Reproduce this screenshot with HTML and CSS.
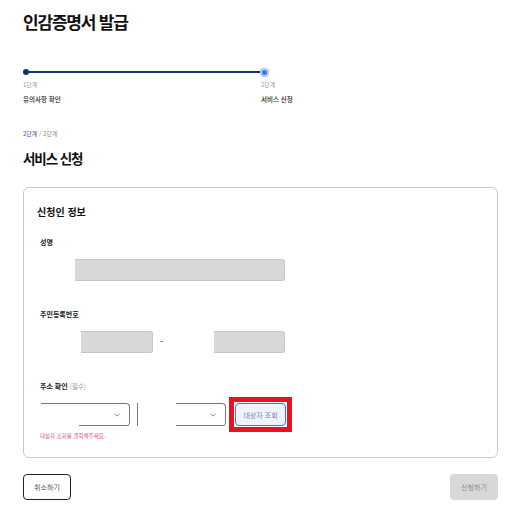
FILE: index.html
```html
<!DOCTYPE html>
<html lang="ko">
<head>
<meta charset="utf-8">
<link rel="stylesheet" href="styles.css">
</head>
<body>
<main class="page">
  <h1 class="title">인감증명서 발급</h1>

  <div class="stepper">
    <div class="track">
      <span class="dot done"></span>
      <span class="bar"></span>
      <span class="dot current"></span>
    </div>
    <div class="step-labels">
      <div class="step">
        <div class="step-no">1단계</div>
        <div class="step-name">유의사항 확인</div>
      </div>
      <div class="step">
        <div class="step-no">2단계</div>
        <div class="step-name">서비스 신청</div>
      </div>
    </div>
  </div>

  <div class="crumb"><span class="crumb-cur">2단계</span> / 2단계</div>
  <h2 class="section-title">서비스 신청</h2>

  <section class="card">
    <h3 class="card-title">신청인 정보</h3>

    <div class="label label-first">성명</div>
    <div class="row row-name">
      <div class="input input-name"></div>
    </div>

    <div class="label">주민등록번호</div>
    <div class="row row-rrn">
      <div class="input input-rrn1"></div>
      <span class="dash">-</span>
      <div class="input input-rrn2"></div>
    </div>

    <div class="label">주소 확인 <span class="opt">(필수)</span></div>
    <div class="row row-addr">
      <div class="select select-1">
        <svg class="chev" width="6" height="4" viewBox="0 0 6 4"><path d="M0.5 0.7 L3 3.2 L5.5 0.7" fill="none" stroke="#777" stroke-width="0.9"/></svg>
      </div>
      <span class="vsep"></span>
      <div class="select select-2">
        <svg class="chev" width="6" height="4" viewBox="0 0 6 4"><path d="M0.5 0.7 L3 3.2 L5.5 0.7" fill="none" stroke="#777" stroke-width="0.9"/></svg>
      </div>
      <span class="highlight">
        <button class="btn-lookup" type="button">대상자 조회</button>
      </span>
    </div>
    <div class="error">대상자 조회를 클릭해주세요.</div>
  </section>

  <div class="actions">
    <button class="btn btn-cancel" type="button">취소하기</button>
    <button class="btn btn-submit" type="button">신청하기</button>
  </div>
</main>
</body>
</html>
```

FILE: styles.css
```css
* { box-sizing: border-box; }
html, body { margin: 0; padding: 0; background: #fff; }
body {
  font-family: "Noto Sans CJK KR", "Noto Sans", sans-serif;
  color: #111;
}
.page {
  width: 475px;
  margin-left: 23px;
  padding-top: 13px;
}
.title {
  margin: 0;
  font-size: 17px;
  line-height: 18px;
  letter-spacing: -1.2px;
  font-weight: 700;
  color: #111;
}

/* stepper */
.stepper { margin-top: 37px; width: 246px; }
.track {
  display: flex;
  align-items: center;
  height: 8px;
}
.dot { display: block; border-radius: 50%; flex: none; }
.dot.done {
  width: 6px; height: 6px;
  background: #0b3573;
}
.dot.current {
  width: 9px; height: 9px;
  background: #3d74e6;
  box-shadow: 0 0 0 2px #bcd0f7 inset;
}
.bar {
  flex: 1;
  height: 2px;
  background: #0b3573;
}
.step-labels {
  display: grid;
  grid-template-columns: 238px auto;
  margin-top: 5px;
}
.step-no {
  font-size: 6px;
  line-height: 8px;
  color: #9a9a9a;
}
.step-name {
  margin-top: 6px;
  font-size: 6.5px;
  line-height: 8px;
  font-weight: 500;
  color: #222;
  white-space: nowrap;
}

/* breadcrumb */
.crumb {
  margin-top: 27px;
  font-size: 6px;
  line-height: 8px;
  color: #8a8a8a;
}
.crumb-cur { color: #3a5793; }
.section-title {
  margin: 12px 0 0;
  font-size: 13.5px;
  line-height: 16px;
  letter-spacing: -1.1px;
  font-weight: 700;
  color: #111;
}

/* card */
.card {
  margin-top: 21px;
  border: 1px solid #c9c9c9;
  border-radius: 6px;
  padding: 17px 14px 17px 13px;
}
.card-title {
  margin: 0;
  font-size: 10px;
  line-height: 14px;
  font-weight: 700;
  color: #111;
}
.label {
  margin: 28px 0 0 3px;
  font-size: 7px;
  line-height: 10px;
  font-weight: 700;
  color: #222;
}
.label-first { margin-top: 18px; }
.label .opt { font-weight: 400; color: #999; font-size: 6.5px; }

.row {
  margin-top: 12px;
  display: flex;
  align-items: center;
}
.input {
  height: 22px;
  background: #d8d8d8;
  border: 1px solid #c6c6c6;
  border-left: none;
  border-radius: 0 3px 3px 0;
}
.input-name { margin-left: 38px; width: 210px; }
.input-rrn1 { margin-left: 44px; width: 72px; }
.dash {
  width: 61px;
  padding-left: 7px;
  font-size: 9px;
  line-height: 22px;
  color: #333;
}
.input-rrn2 { width: 71px; }

.row-addr { margin-top: 6px; }
.select {
  position: relative;
  height: 23px;
  border-top: 1px solid #7a7a7a;
  border-right: 1px solid #7a7a7a;
  border-radius: 0 4px 4px 0;
  display: flex;
  align-items: center;
  justify-content: flex-end;
  padding-right: 9px;
}
.select::after {
  content: "";
  position: absolute;
  bottom: 0;
  right: 0;
  height: 1px;
  background: #7a7a7a;
  border-radius: 0 0 4px 0;
}
.select-1 { margin-left: 4px; width: 89px; }
.select-1::after { left: 38px; }
.select-2 { margin-left: 0; width: 50px; }
.select-2::after { left: 0; }
.chev { display: block; }
.vsep {
  width: 1px;
  height: 23px;
  background: #7a7a7a;
  margin: 0 38px 0 7px;
}
.highlight {
  display: block;
  margin-left: 3px;
  padding: 1px;
  border: 5px solid #e5141f;
  background: #fff;
}
.btn-lookup {
  display: block;
  width: 51px;
  height: 23px;
  padding: 0;
  font-family: inherit;
  font-size: 7px;
  color: #7d87a8;
  background: #eef3fd;
  border: 1.5px solid #3f7ae8;
  border-radius: 4px;
}
.error {
  margin: 0 0 0 3px;
  font-size: 5.5px;
  line-height: 8px;
  color: #e0546b;
}

/* actions */
.actions {
  margin-top: 16px;
  display: flex;
  justify-content: space-between;
}
.btn {
  width: 48px;
  height: 26px;
  padding: 0;
  font-family: inherit;
  font-size: 7px;
  border-radius: 4px;
}
.btn-cancel {
  background: #fff;
  border: 1px solid #222;
  color: #555;
}
.btn-submit {
  background: #d8d8d8;
  border: 1px solid #d8d8d8;
  color: #8a8a8a;
}
```
